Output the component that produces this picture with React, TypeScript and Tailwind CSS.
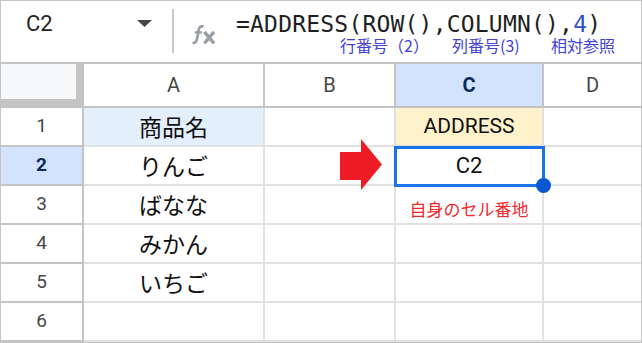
import React from "react";

const JP = "font-['Noto_Sans_CJK_JP',sans-serif]";
const RB = "font-['Roboto','Noto_Sans_CJK_JP',sans-serif]";

type Row = {
  n: string;
  a?: string;
  aBg?: string;
  cBg?: string;
  sel?: boolean;
};

const rows: Row[] = [
  { n: "1", a: "商品名", aBg: "bg-[#e4effc]", cBg: "bg-[#fef2cd]" },
  { n: "2", a: "りんご", sel: true },
  { n: "3", a: "ばなな" },
  { n: "4", a: "みかん" },
  { n: "5", a: "いちご" },
  { n: "6" },
];

export default function App() {
  return (
    <div className={`w-[642px] h-[343px] border border-[#c4c4c4] bg-white flex flex-col overflow-hidden ${RB}`}>
      {/* formula bar */}
      <div className="h-[63px] shrink-0 border-b-2 border-[#c4c4c4] flex items-start">
        <div className="w-[171px] flex items-start pt-[12px] pl-[25px]">
          <span className="text-[22px] leading-[22px] text-[#1f1f1f]">C2</span>
          <svg className="ml-auto mr-[20px] mt-[7px]" width="15" height="7" viewBox="0 0 15 7">
            <polygon points="0,0 15,0 7.5,7" fill="#444746" />
          </svg>
        </div>
        <div className="w-[2px] h-[44px] mt-[8px] bg-[#c7c7c7]" />
        <svg className="ml-[18px] mt-[24px]" width="24" height="19" viewBox="0 0 24 19">
          <path d="M0.6 17.6 Q4.2 18.8 5.2 13.2 L6.8 4.4 Q7.8 0.4 11.6 1.6" fill="none" stroke="#9aa0a6" strokeWidth="2.8" />
          <path d="M2.8 7.4 H10" fill="none" stroke="#9aa0a6" strokeWidth="2.4" />
          <path d="M12.4 6.8 L22 18.4 M22 6.8 L12.4 18.4" fill="none" stroke="#9aa0a6" strokeWidth="3.4" />
        </svg>
        <div className="ml-[20px] flex flex-col pt-[12px]">
          <div className="font-['DejaVu_Sans_Mono',monospace] text-[23px] leading-[23px] tracking-[0.2px] text-[#1f1f1f] whitespace-nowrap">
            =ADDRESS(ROW(),COLUMN(),<span className="text-[#2f52c8]">4</span>)
          </div>
          <div className={`flex ml-[104px] mt-[1px] text-[16px] leading-[16px] text-[#4141d6] whitespace-nowrap ${JP}`}>
            <span className="w-[112px]">行番号（2）</span>
            <span className="w-[99px]">列番号(3)</span>
            <span>相対参照</span>
          </div>
        </div>
      </div>

      {/* column headers */}
      <div className="h-[44px] shrink-0 flex">
        <div className="w-[83px] h-[44px] bg-[#c4c4c4]">
          <div className="w-[75px] h-[35px] bg-[#f8f9fa]" />
        </div>
        <div className="w-[181px] border-r-2 border-b-2 border-[#c4c4c4] flex items-center justify-center text-[20px] text-[#444746]">A</div>
        <div className="w-[131px] border-r-2 border-b-2 border-[#c4c4c4] flex items-center justify-center text-[20px] text-[#444746]">B</div>
        <div className="w-[148px] border-r-2 border-b-2 border-[#c4c4c4] bg-[#d3e3fd] flex items-center justify-center text-[20px] font-bold text-[#0b2a5c]">C</div>
        <div className="flex-1 border-b-2 border-[#c4c4c4] flex items-center justify-center text-[20px] text-[#444746]">D</div>
      </div>

      {/* body rows */}
      {rows.map((r) => (
        <div key={r.n} className={`h-[39px] shrink-0 flex relative ${r.sel ? "z-10" : ""}`}>
          <div
            className={`w-[83px] border-r-2 border-b-2 border-[#c4c4c4] flex items-center justify-center text-[19px] ${
              r.sel ? "bg-[#d3e3fd] font-bold text-[#0b2a5c]" : "text-[#444746]"
            }`}
          >
            {r.n}
          </div>
          <div
            className={`w-[181px] border-r-2 border-b-2 border-[#e1e1e1] flex items-center justify-center text-[23px] text-[#111] ${JP} ${r.aBg ?? ""}`}
          >
            {r.a}
          </div>
          <div className="w-[131px] border-r-2 border-b-2 border-[#e1e1e1] relative">
            {r.sel && (
              <svg className="absolute left-[75px] top-[-8px]" width="42" height="51" viewBox="0 0 42 51">
                <polygon points="0,13 21,13 21,0 42,25.5 21,51 21,41 0,41" fill="#ed1c24" />
              </svg>
            )}
          </div>
          <div
            className={`w-[148px] border-r-2 border-b-2 border-[#e1e1e1] relative flex items-center justify-center text-[21px] text-[#111] ${r.cBg ?? ""}`}
          >
            {r.n === "1" && "ADDRESS"}
            {r.sel && (
              <>
                <span className="text-[22px]">C2</span>
                <div className="absolute z-10 left-[-2px] top-[-1px] w-[151px] h-[41px] border-[3px] border-[#1a73e8]" />
                <div className="absolute z-20 left-[140px] top-[31px] w-[15px] h-[15px] rounded-full bg-[#0b57d0]" />
              </>
            )}
            {r.n === "3" && (
              <span className={`mt-[8px] text-[17px] text-[#ee2a2f] ${JP}`}>自身のセル番地</span>
            )}
          </div>
          <div className="flex-1 border-b-2 border-[#e1e1e1]" />
        </div>
      ))}
    </div>
  );
}
